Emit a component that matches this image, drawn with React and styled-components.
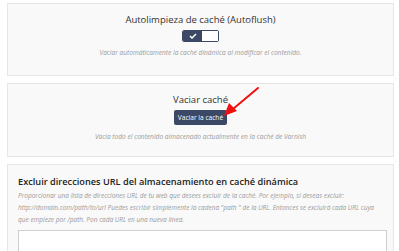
import React from 'react';
import styled, { createGlobalStyle } from 'styled-components';

const Global = createGlobalStyle`
  body {
    margin: 0;
    background: #ffffff;
    font-family: "Open Sans", "Liberation Sans", sans-serif;
  }
`;

const Page = styled.div`
  position: relative;
  display: flex;
  flex-direction: column;
  gap: 7px;
  padding: 3px 5px 0 7px;
  height: 251px;
  overflow: hidden;
  box-sizing: border-box;
`;

const Card = styled.div`
  background: #f9f9f9;
  border: 1px solid #e6e6e6;
  box-sizing: border-box;
  height: ${props => props.h || 'auto'};
  padding: ${props => props.pad || '10px'};
  display: flex;
  flex-direction: column;
  align-items: ${props => (props.left ? 'flex-start' : 'center')};
  flex-shrink: 0;
`;

const Title = styled.div`
  font-size: 9.5px;
  line-height: 12px;
  color: #333;
`;

const Desc = styled.div`
  font-size: 6.6px;
  line-height: 12px;
  font-style: italic;
  color: #999;
  margin-top: ${props => props.mt || '0'};
`;

const Toggle = styled.div`
  display: flex;
  margin-top: 4px;
  width: 37px;
  height: 12px;
  border-radius: 2px;
  overflow: hidden;
  border: 1px solid #3b4866;
  box-sizing: border-box;
`;

const ToggleOn = styled.div`
  width: 19px;
  background: #3b4866;
  display: flex;
  align-items: center;
  justify-content: center;
`;

const ToggleOff = styled.div`
  flex: 1;
  background: #fff;
`;

const Button = styled.button`
  margin-top: 4px;
  height: 15px;
  width: 53px;
  padding: 0;
  border: none;
  border-radius: 2px;
  background: #3b4866;
  color: #fff;
  font-family: "Open Sans", "Liberation Sans", sans-serif;
  font-size: 6.6px;
`;

const SectionTitle = styled.div`
  font-size: 9.2px;
  font-weight: 600;
  color: #222;
  line-height: 12px;
`;

const DescBlock = styled.div`
  margin-top: 2px;
  font-size: 6.5px;
  line-height: 12px;
  font-style: italic;
  color: #999;
`;

const TextArea = styled.div`
  margin-top: 4px;
  width: 369px;
  height: 60px;
  background: #fff;
  border: 1px solid #cfcfcf;
  box-sizing: border-box;
  flex-shrink: 0;
`;

const Arrow = styled.svg`
  position: absolute;
  left: 220px;
  top: 84px;
`;

export default function App() {
  return (
    <>
      <Global />
      <Page>
        <Card h="73px" pad="10px 10px">
          <Title>Autolimpieza de caché (Autoflush)</Title>
          <Toggle>
            <ToggleOn>
              <svg width="8" height="6" viewBox="0 0 8 6">
                <path d="M1 3 L3 5 L7 1" stroke="#fff" strokeWidth="1.5" fill="none" />
              </svg>
            </ToggleOn>
            <ToggleOff />
          </Toggle>
          <Desc mt="5px">Vaciar automáticamente la caché dinámica al modificar el contenido.</Desc>
        </Card>
        <Card h="74px" pad="10px 10px">
          <Title>Vaciar caché</Title>
          <Button>Vaciar la caché</Button>
          <Desc mt="6px">Vacia todo el contenido almacenado actualmente en la caché de Varnish</Desc>
        </Card>
        <Card left pad="11px 10px 0 10px" h="100px">
          <SectionTitle>Excluir direcciones URL del almacenamiento en caché dinámica</SectionTitle>
          <DescBlock>
            Proporcionar una lista de direcciones URL de tu web que desees excluir de la caché. Por ejemplo, si deseas excluir:<br />
            http://domain.com/path/to/url Puedes escribir simplemente la cadena "path " de la URL. Entonces se excluirá cada URL cuya<br />
            que empieze por /path. Pon cada URL en una nueva línea.
          </DescBlock>
          <TextArea />
        </Card>
        <Arrow width="44" height="36" viewBox="0 0 44 36">
          <path d="M38 4 L13 25" stroke="#ee1111" strokeWidth="2" strokeLinecap="round" />
          <polygon points="4,32 9,19 17,27" fill="#ee1111" />
        </Arrow>
      </Page>
    </>
  );
}
